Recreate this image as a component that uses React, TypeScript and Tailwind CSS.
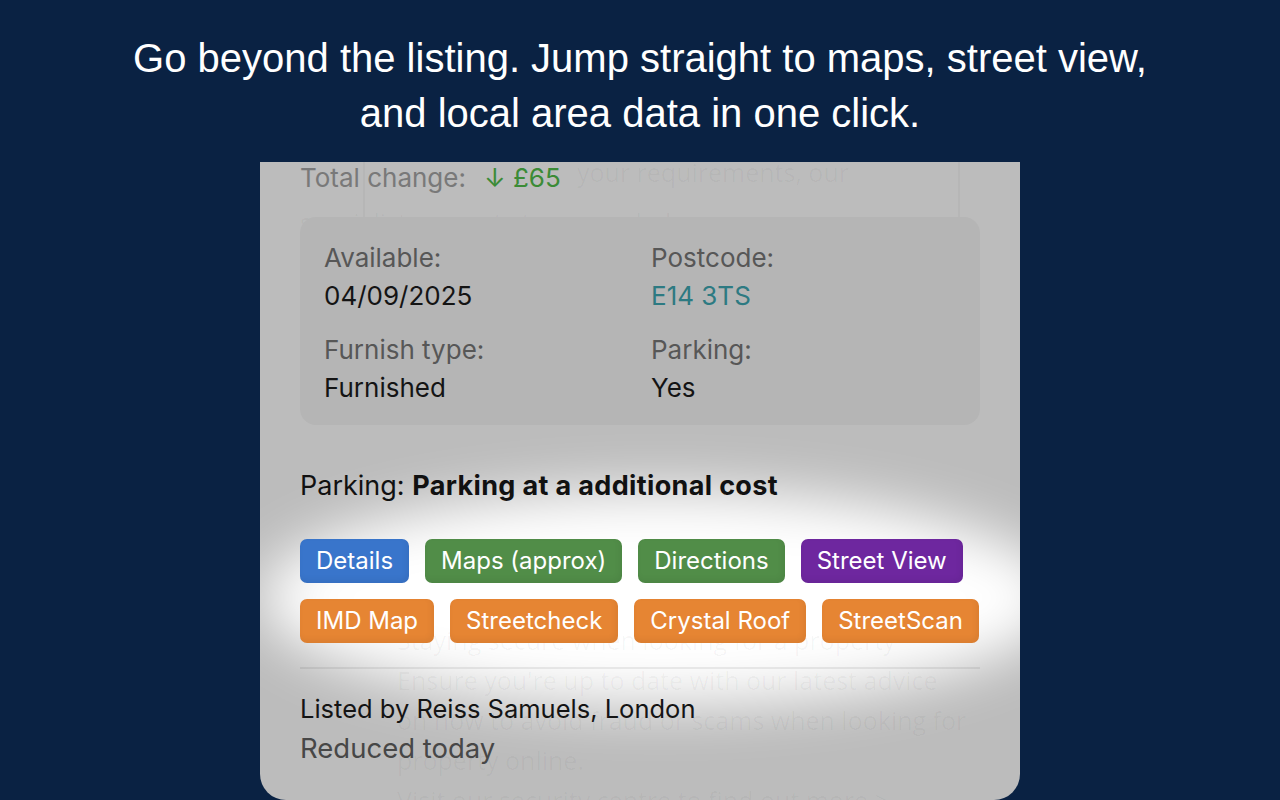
import React from "react";

const buttonsTop = [
  { label: "Details", cls: "bg-[#3975cb]" },
  { label: "Maps (approx)", cls: "bg-[#518d48]" },
  { label: "Directions", cls: "bg-[#518d48]" },
  { label: "Street View", cls: "bg-[#6e279f]" },
];

const buttonsBottom = [
  { label: "IMD Map", cls: "bg-[#e68533]" },
  { label: "Streetcheck", cls: "bg-[#e68533]" },
  { label: "Crystal Roof", cls: "bg-[#e68533]" },
  { label: "StreetScan", cls: "bg-[#e68533]" },
];

function LinkButton({ label, cls }: { label: string; cls: string }) {
  return (
    <button
      className={`h-[44px] rounded-[7px] px-[16px] text-[24px] leading-none text-white shadow-[inset_-2px_-3px_6px_rgba(0,0,0,0.06)] ${cls}`}
    >
      {label}
    </button>
  );
}

function InfoItem({ label, value, valueCls }: { label: string; value: string; valueCls?: string }) {
  return (
    <div className="flex flex-col">
      <span className="text-[26px] leading-[38px] text-[#575757]">{label}</span>
      <span className={`text-[26px] leading-[38px] ${valueCls ?? "text-[#141414]"}`}>{value}</span>
    </div>
  );
}

export default function App() {
  return (
    <div className="min-h-[800px] h-[800px] overflow-hidden bg-[#0a2243] flex flex-col items-center">
      <h1 className="pt-[31px] text-center text-[40px] leading-[55px] text-white font-['Liberation_Sans',Arial,sans-serif]">
        Go beyond the listing. Jump straight to maps, street view,
        <br />
        and local area data in one click.
      </h1>

      <div className="relative mt-[21px] w-[760px] flex-1 overflow-hidden rounded-b-[26px] bg-[#bcbcbc] font-['Inter','Noto_Sans',sans-serif]">
        {/* soft highlight behind the link buttons */}
        <div className="pointer-events-none absolute left-[0px] top-[328px] h-[215px] w-[800px] rounded-[50%] bg-white blur-[28px]" />

        {/* page content showing faintly through the sheet */}
        <div className="pointer-events-none absolute inset-0 text-[25px] text-black/[0.035] font-['Open_Sans',sans-serif]">
          <div className="absolute left-[103px] top-[-40px] h-[300px] w-[597px] rounded-[10px] border-2 border-black/[0.03]" />
          <div className="absolute left-[317px] top-[-10px] leading-[40px]">your requirements, our</div>
          <div className="absolute left-[40px] top-[40px] leading-[40px]">specialist property team can help</div>
          <div className="absolute left-[137px] top-[458px] leading-[40px]">
            <div>Staying secure when looking for a property</div>
            <div>Ensure you're up to date with our latest advice</div>
            <div>on how to avoid fraud or scams when looking for</div>
            <div>property online.</div>
            <div>Visit our security centre to find out more &gt;</div>
          </div>
        </div>

        <div className="relative flex flex-col px-[40px]">
          <div className="flex items-center gap-[18px] text-[26px] leading-[32px]">
            <span className="text-[#797979]">Total change:</span>
            <span className="text-[#3b8b36]">↓ £65</span>
          </div>

          <div className="mt-[23px] grid grid-cols-2 gap-x-[22px] gap-y-[16px] rounded-[16px] bg-[#b5b5b5] px-[24px] pb-[18px] pt-[22px]">
            <InfoItem label="Available:" value="04/09/2025" />
            <InfoItem label="Postcode:" value="E14 3TS" valueCls="text-[#2d7a82]" />
            <InfoItem label="Furnish type:" value="Furnished" />
            <InfoItem label="Parking:" value="Yes" />
          </div>

          <p className="mt-[44px] text-[27px] leading-[34px] text-[#111]">
            Parking: <span className="font-bold tracking-[0.35px]">Parking at a additional cost</span>
          </p>

          <div className="mt-[36px] flex flex-col gap-[16px]">
            <div className="flex gap-[16px]">
              {buttonsTop.map((b) => (
                <LinkButton key={b.label} {...b} />
              ))}
            </div>
            <div className="flex gap-[16px]">
              {buttonsBottom.map((b) => (
                <LinkButton key={b.label} {...b} />
              ))}
            </div>
          </div>

          <div className="mt-[24px] h-[2px] bg-black/[0.07]" />

          <p className="mt-[22px] text-[25.5px] leading-[36px] text-[#141414]">Listed by Reiss Samuels, London</p>
          <p className="text-[27.5px] leading-[42px] text-[#474747]">Reduced today</p>
        </div>
      </div>
    </div>
  );
}
